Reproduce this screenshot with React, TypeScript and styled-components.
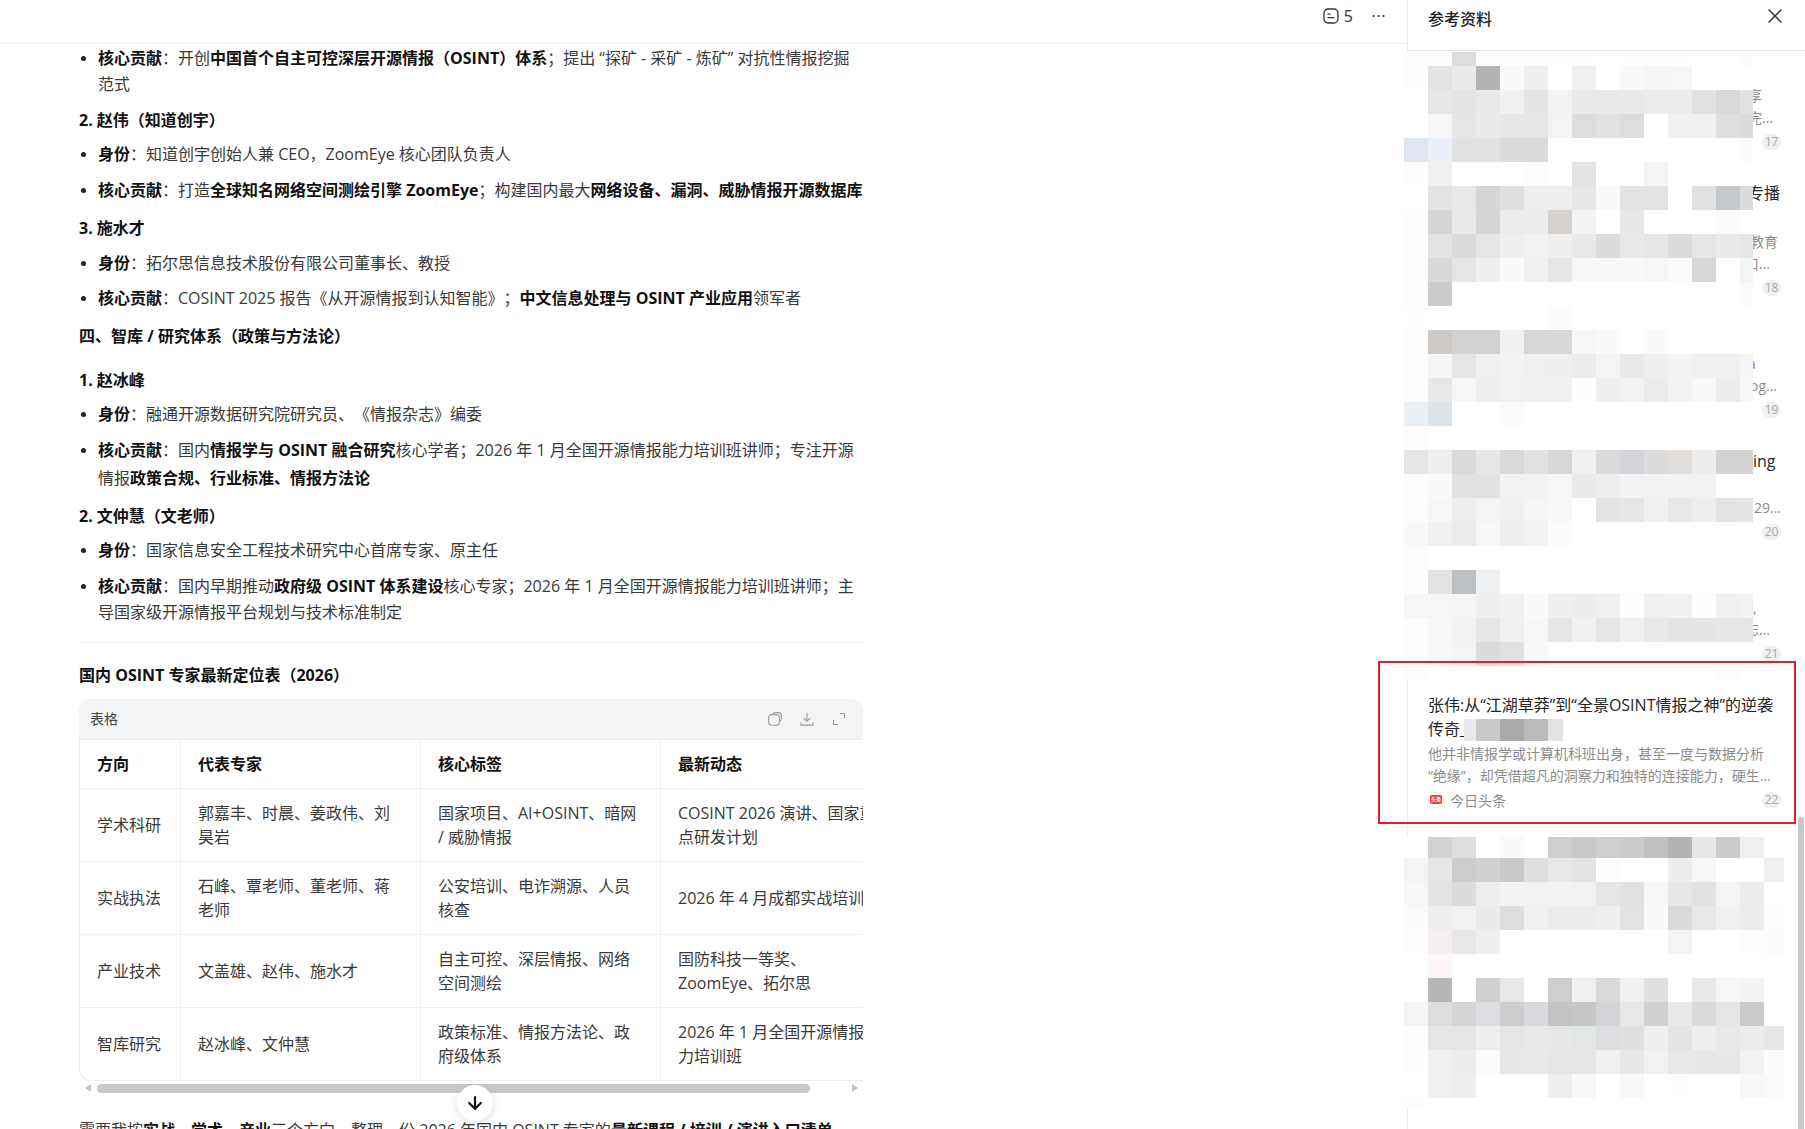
import React from 'react'
import styled, { createGlobalStyle } from 'styled-components'
import { ArrowDown, X } from 'lucide-react'

const GlobalStyle = createGlobalStyle`
  html, body {
    margin: 0;
    height: 100%;
    background: #fff;
    overflow: hidden;
  }
  body {
    font-family: "Open Sans", "Noto Sans CJK SC", sans-serif;
    color: #333;
    font-size: 16px;
    text-spacing-trim: space-all;
  }
`

const Page = styled.div`
  position: relative;
  display: flex;
  height: 1129px;
  overflow: hidden;
`

const Main = styled.main`
  flex: 1;
  min-width: 0;
`

const TopBar = styled.header`
  display: flex;
  justify-content: flex-end;
  align-items: center;
  height: 32px;
  padding: 0 22px 11px 0;
  border-bottom: 1px solid #eeeeee;
  color: #333;
`

const CommentCount = styled.span`
  display: inline-flex;
  align-items: center;
  gap: 5px;
  margin-right: 19px;
  font-size: 16px;
  line-height: 20px;
`

const Article = styled.article`
  width: 784px;
  margin-left: 79px;
  padding-top: 1px;
  line-height: 26px;
`

const BulletList = styled.ul`
  margin: 0;
  padding: 0 0 0 19px;
  list-style: disc;
`

const Item = styled.li<{ $gap?: number; $loose?: boolean }>`
  margin-top: ${p => p.$gap ?? 10}px;
  line-height: ${p => (p.$loose ? 28 : 26)}px;
  color: #3a3a3a;
  &::marker {
    color: #222;
    font-size: 14px;
  }
  strong {
    color: #111;
    font-weight: 700;
  }
`

const Heading = styled.div<{ $gap: number }>`
  margin-top: ${p => p.$gap}px;
  font-weight: 700;
  color: #111;
`

const Rule = styled.hr`
  margin: 17px 0 19px;
  border: 0;
  height: 1px;
  background: #ececec;
`

const TableSection = styled.section`
  position: relative;
  margin-top: 11px;
`

const TableBar = styled.div`
  display: flex;
  justify-content: space-between;
  align-items: center;
  height: 41px;
  padding: 0 16px 0 11px;
  border-radius: 12px 12px 0 0;
  border-bottom: 1px solid #eceef0;
  background: #f3f4f6;
  font-size: 14px;
  color: #444;
  box-sizing: border-box;
`

const TableTools = styled.div`
  display: flex;
  gap: 16px;
  color: #9a9a9a;
`

const TableClip = styled.div`
  overflow: hidden;
  border-left: 1px solid #eceef0;
  border-bottom: 1px solid #eceef0;
  border-bottom-left-radius: 12px;
`

const Grid = styled.table`
  width: 821px;
  table-layout: fixed;
  border-collapse: separate;
  border-spacing: 0;
`

const HeadCell = styled.th<{ $width: number }>`
  width: ${p => p.$width}px;
  box-sizing: border-box;
  padding: 12px 16px 12px 17px;
  border-right: 1px solid #eceef0;
  border-bottom: 1px solid #eceef0;
  text-align: left;
  font-weight: 700;
  line-height: 24px;
  color: #111;
`

const Cell = styled.td<{ $last?: boolean }>`
  padding: 12px 15px 12px 17px;
  border-right: 1px solid #eceef0;
  border-bottom: ${p => (p.$last ? '0' : '1px solid #eceef0')};
  vertical-align: middle;
  line-height: 24px;
  color: #3a3a3a;
`

const ScrollRow = styled.div`
  display: flex;
  align-items: center;
  height: 14px;
  padding: 0 5px 0 6px;
`

const ScrollArrow = styled.i<{ $right?: boolean }>`
  width: 0;
  height: 0;
  border-style: solid;
  border-width: 4px 0 4px 6px;
  border-color: transparent transparent transparent #c4c4c4;
  transform: ${p => (p.$right ? 'none' : 'rotate(180deg)')};
`

const ScrollThumb = styled.div`
  width: 713px;
  height: 9px;
  margin: 0 auto 0 6px;
  border-radius: 5px;
  background: #c8c8c8;
`

const JumpButton = styled.button`
  position: absolute;
  left: 378px;
  bottom: -26px;
  display: flex;
  align-items: center;
  justify-content: center;
  width: 36px;
  height: 36px;
  padding: 0;
  border: 0;
  border-radius: 50%;
  background: #fff;
  color: #111;
  box-shadow: 0 2px 8px rgba(0, 0, 0, 0.12);
`

const NextPrompt = styled.p`
  margin: 22px 0 0;
  color: #3a3a3a;
  white-space: nowrap;
  strong {
    color: #111;
    font-weight: 700;
  }
`

const Sidebar = styled.aside`
  position: relative;
  flex: 0 0 397px;
  border-left: 1px solid #eeeeee;
`

const SidebarHead = styled.div`
  position: relative;
  z-index: 1;
  display: flex;
  justify-content: space-between;
  align-items: flex-start;
  height: 46px;
  padding: 4px 18px 0 20px;
  border-bottom: 1px solid #e8e8e8;
  background: #fff;
`

const SidebarTitle = styled.h2`
  margin: 3px 0 0;
  font-size: 16px;
  line-height: 24px;
  font-weight: 500;
  color: #222;
`

const CardList = styled.div`
  margin-top: -3px;
`

const Card = styled.div`
  padding: 11px 24px 16px 20px;
`

const CardTitle = styled.div<{ $inset?: number }>`
  min-height: 24px;
  padding-left: ${p => p.$inset ?? 0}px;
  font-size: 16px;
  line-height: 24px;
  color: #262626;
  white-space: nowrap;
`

const TitleBlur = styled.svg`
  display: inline-block;
  vertical-align: top;
  margin: 2px 0 0 -3px;
`

const CardDesc = styled.div<{ $inset?: number }>`
  height: 22px;
  padding-left: ${p => p.$inset ?? 0}px;
  font-size: 14px;
  line-height: 22px;
  color: #8c8c8c;
  white-space: nowrap;
`

const CardBody = styled.div`
  margin-top: 2px;
`

const CardFoot = styled.div`
  display: flex;
  align-items: center;
  justify-content: space-between;
  height: 25px;
`

const Source = styled.span`
  display: inline-flex;
  align-items: center;
  gap: 6px;
  font-size: 14px;
  color: #8c8c8c;
`

const SourceLogo = styled.span`
  display: inline-flex;
  align-items: center;
  justify-content: center;
  box-sizing: border-box;
  width: 16px;
  height: 16px;
  border: 1px solid #e4e4e4;
  border-radius: 50%;
`

const SourceMark = styled.b`
  display: block;
  width: 12px;
  height: 9px;
  border-radius: 2px;
  background: #f04142;
  color: #fff;
  font-size: 5px;
  line-height: 9px;
  text-align: center;
  font-weight: 700;
`

const Badge = styled.span`
  margin-left: auto;
  min-width: 19px;
  height: 16px;
  border-radius: 8px;
  background: #f0f0f0;
  color: #aaaaaa;
  font-size: 12px;
  line-height: 16px;
  text-align: center;
`

const MosaicLayer = styled.svg<{ $top: number }>`
  position: absolute;
  left: -4px;
  top: ${p => p.$top}px;
  display: block;
`

const SideThumb = styled.div`
  position: absolute;
  right: 1px;
  top: 817px;
  bottom: 0;
  width: 6px;
  border-radius: 3px 3px 0 0;
  background: #c8c8c8;
`

const RedFrame = styled.div`
  position: absolute;
  left: 1378px;
  top: 661px;
  width: 414px;
  height: 159px;
  border: 2px solid #ed1c24;
  pointer-events: none;
`

// sampled from the blurred parts of the panel, one string per row of 24px cells
const upperMosaic = [
  'fd fd dd fd fe fe fe fe ff fe fe fe ff ff fc',
  'fd e3 ea b4 f9 ef ff f0 ff f9 f5 f6 ff ff ff',
  'ff e6 e4 e9 f1 e4 f3 ea ea ea ec ec e2 d9 e2',
  'ff f7 e5 ea e6 e6 f4 dd e2 dd ff f1 f1 de dc',
  'dfe6f0 ebeff7 e2 e2 dc dc ff ff ff ff ff ff ff ff fb',
  'fd f0 ff ff ff fd ff e4 ff ff f5 ff ff ff ff',
  'ff e3 e8 d5 e0 ee ee e7 fa e3 e3 ff e1 c6c9cc dc',
  'fd d6 ea d6 ec ec d5d2cf f3 ff e7 ff ff ff fb ff',
  'fd e3 dc e5 ef f2 ef e9 dc e9 e6 dc e5 ea e6',
  'fd d8 e5 ef fa f0 e5 f7 f8 f8 f6 fb d7 ff f5',
  'fd cb ff ff ff ff ff ff ff ff ff ff ff ff fb',
  'fe ff ff ff ff ff fc ff ff ff ff ff ff ff ff',
  'fd cdc9c6 d2 d2 f1 d8 d8 f7 fa ff fa ff ff ff ff',
  'fd f5 e6 f0 f3 f0 ef ec f4 e9 ef f3 f0 f0 f5',
  'fd e8 f6 ef f2 f1 f1 fd ef f3 ec f3 f8 ebedef f7',
  'e9eff3 dce4ea ff ff fb ff ff ff ff ff ff ff ff ff ff',
  'fd ff ff ff ff ff ff ff ff ff ff ff ff ff ff',
  'e6 ef dbd9da e6 d9 e2 d7 f0 da d4d5da dc e3dfdd eeedeb d3 d3',
  'fd fa e2 e2 f2 f2 f6 ea ee f3 f3 f3 f2 ff ff',
  'fd f7 ee f4 f0 f5 f8 ff e4 e6 f1 e8 ee e3 e4',
  'f9 f1 ec f7 ef f3 fb ff ff ff ff ff ff ff ff',
  'fd ff ff ff ff ff ff ff ff ff ff ff ff ff ff',
  'fd e3 bcc0c3 eef0f2 ff ff ff ff ff ff ff ff ff ff ff',
  'f6 f6 f5 ef f1 fa ef ecedef f0 fd f0 f1 fd f0 f2',
  'fd f8 f3 e6 f0 f7 e5 f1 e5 f0 e9 e4 e4 e6 e5',
  'fd f8 f4 dc e1 f9 ff ff ff ff ff ff ff ff ff',
  'fd ff ff ff ff ff ff ff ff ff ff ff ff fd ff'
]

const lowerMosaic = [
  'ff d2 dd ff fa ff cfcdce c8 ce ca c1 b3 e6 cb f0 ff',
  'f4 e6 cc d1 c9 df e8 e4 fd ff ff ecedef f6 ff ff eef0f2',
  'f7 e4 dc edeef0 f3 f2 f3 f2 e5 e1 f8 e7 e2 f4 ec ff',
  'fb ee f2 eb dd f1 ec ec ef e3 fa da e8 f1 ed fd',
  'fd f5eff0 e8 ef ff ff ff ff ff ff ff f4 ff ff fd fc',
  'ff fef6f7 ff ff ff ff ff ff ff ff ff ff ff ff ff ff',
  'ff b6 ff cfd1d0 e8 ff ce f0 d9 f1 e0 ff e8 f6 f3 ff',
  'f4 dfdcde d5 dcdde0 cfcdcb d8d9dc c3 c7 d3d5d9 e8 d1 e9 da e5 c9cbca ff',
  'fd e6 e5 ee e5 e8 e7 e2e6e5 e0dde0 e0 ef e4 ee e8 ec e6',
  'fd f0 ec fb e7 e8 e6 e6 f0 e7 f2 e8 e7 e7 f3 fc',
  'ff f0 ee ff ff ff ee f8 ff f9 ff fe ff ff f8 fb',
  'fd ff ff ff ff ff ff ff ff ff ff ff ff ff ff ff'
]

const toColor = (c: string) => (c.length === 2 ? `#${c}${c}${c}` : `#${c}`)

interface MosaicProps {
  rows: string[]
  top: number
  width: number
  height: number
  firstRow: number
}

const Mosaic: React.FC<MosaicProps> = ({ rows, top, width, height, firstRow }) => (
  <MosaicLayer $top={top} width={width} height={height} shapeRendering="crispEdges" aria-hidden="true">
    {rows.map((row, r) =>
      row.split(' ').map((c, i) => (
        <rect
          key={`${r}-${i}`}
          x={i * 24}
          y={r === 0 ? 0 : firstRow + (r - 1) * 24}
          width={24}
          height={r === 0 ? firstRow : 24}
          fill={toColor(c)}
        />
      ))
    )}
  </MosaicLayer>
)

const NoteIcon = () => (
  <svg width="16" height="16" viewBox="0 0 16 16" fill="none" stroke="currentColor">
    <rect x="1" y="1" width="14" height="14" rx="4" strokeWidth="1.3" />
    <path d="M4.5 6.2h3M4.5 9.6h7" strokeWidth="1.3" />
  </svg>
)

const DotsIcon = () => (
  <svg width="13" height="4" viewBox="0 0 13 4" fill="currentColor">
    <circle cx="1.5" cy="2" r="1.1" />
    <circle cx="6.5" cy="2" r="1.1" />
    <circle cx="11.5" cy="2" r="1.1" />
  </svg>
)

const CopyIcon = () => (
  <svg width="16" height="16" viewBox="0 0 16 16" fill="none" stroke="currentColor" strokeWidth="1.1">
    <path d="M5.5 3.6C6 2.4 7 1.6 8.4 1.6h3c1.700 0 2.900 1.200 2.900 2.900v3c0 1.300-.7 2.300-1.900 2.800" />
    <rect x="1.700" y="3.600" width="10.700" height="10.700" rx="3" />
  </svg>
)

const SaveIcon = () => (
  <svg width="16" height="16" viewBox="0 0 16 16" fill="none" stroke="currentColor" strokeWidth="1.1">
    <path d="M8 1.800v8.200M4.600 6.800 8 10.200l3.400-3.400M2 11.200v2.900h12v-2.900" />
  </svg>
)

const ExpandIcon = () => (
  <svg width="16" height="16" viewBox="0 0 16 16" fill="none" stroke="currentColor" strokeWidth="1.1">
    <path d="M9 2.500h4.500V7M7 13.500H2.500V9" />
  </svg>
)

const columns = [
  { label: '方向', width: 101 },
  { label: '代表专家', width: 240 },
  { label: '核心标签', width: 240 },
  { label: '最新动态', width: 240 }
]

const tableRows = [
  ['学术科研', '郭嘉丰、时晨、姜政伟、刘昊岩', '国家项目、AI+OSINT、暗网 / 威胁情报', 'COSINT 2026 演讲、国家重点研发计划'],
  ['实战执法', '石峰、覃老师、董老师、蒋老师', '公安培训、电诈溯源、人员核查', '2026 年 4 月成都实战培训班'],
  ['产业技术', '文盖雄、赵伟、施水才', '自主可控、深层情报、网络空间测绘', '国防科技一等奖、ZoomEye、拓尔思'],
  ['智库研究', '赵冰峰、文仲慧', '政策标准、情报方法论、政府级体系', '2026 年 1 月全国开源情报能力培训班']
]

interface Fragment {
  text: string
  inset: number
}

interface SourceCard {
  index: number
  title: (Fragment | null)[]
  desc: (Fragment | null)[]
}

const hiddenCards: SourceCard[] = [
  { index: 17, title: [null], desc: [{ text: '享', inset: 320 }, { text: '完...', inset: 320 }] },
  { index: 18, title: [{ text: '专播', inset: 320 }, null], desc: [{ text: '教育', inset: 322 }, { text: '口...', inset: 317 }] },
  { index: 19, title: [null], desc: [{ text: 'a', inset: 320 }, { text: 'og...', inset: 322 }] },
  { index: 20, title: [{ text: 'ing', inset: 325 }], desc: [null, { text: '29...', inset: 326 }] },
  { index: 21, title: [null], desc: [{ text: ',', inset: 325 }, { text: '忘...', inset: 317 }] }
]

const FragmentCard: React.FC<{ card: SourceCard }> = ({ card }) => (
  <Card>
    {card.title.map((t, i) => (
      <CardTitle key={i} $inset={t?.inset}>{t?.text}</CardTitle>
    ))}
    <CardBody>
      {card.desc.map((d, i) => (
        <CardDesc key={i} $inset={d?.inset}>{d?.text}</CardDesc>
      ))}
    </CardBody>
    <CardFoot>
      <Badge>{card.index}</Badge>
    </CardFoot>
  </Card>
)

const App: React.FC = () => (
  <Page>
    <GlobalStyle />
    <Main>
      <TopBar>
        <CommentCount><NoteIcon />5</CommentCount>
        <DotsIcon />
      </TopBar>
      <Article>
        <BulletList>
          <Item $gap={0}>
            <strong>核心贡献</strong>：开创<strong>中国首个自主可控深层开源情报（OSINT）体系</strong>；提出 “探矿 - 采矿 - 炼矿” 对抗性情报挖掘范式
          </Item>
        </BulletList>
        <Heading $gap={10}>2. 赵伟（知道创宇）</Heading>
        <BulletList>
          <Item $gap={8}><strong>身份</strong>：知道创宇创始人兼 CEO，ZoomEye 核心团队负责人</Item>
          <Item><strong>核心贡献</strong>：打造<strong>全球知名网络空间测绘引擎 ZoomEye</strong>；构建国内最大<strong>网络设备、漏洞、威胁情报开源数据库</strong></Item>
        </BulletList>
        <Heading $gap={12}>3. 施水才</Heading>
        <BulletList>
          <Item $gap={9}><strong>身份</strong>：拓尔思信息技术股份有限公司董事长、教授</Item>
          <Item $gap={9}><strong>核心贡献</strong>：COSINT 2025 报告《从开源情报到认知智能》；<strong>中文信息处理与 OSINT 产业应用</strong>领军者</Item>
        </BulletList>
        <Heading $gap={12}>四、智库 / 研究体系（政策与方法论）</Heading>
        <Heading $gap={18}>1. 赵冰峰</Heading>
        <BulletList>
          <Item $gap={8}><strong>身份</strong>：融通开源数据研究院研究员、《情报杂志》编委</Item>
          <Item $gap={9} $loose>
            <strong>核心贡献</strong>：国内<strong>情报学与 OSINT 融合研究</strong>核心学者；2026 年 1 月全国开源情报能力培训班讲师；专注开源情报<strong>政策合规、行业标准、情报方法论</strong>
          </Item>
        </BulletList>
        <Heading $gap={11}>2. 文仲慧（文老师）</Heading>
        <BulletList>
          <Item $gap={8}><strong>身份</strong>：国家信息安全工程技术研究中心首席专家、原主任</Item>
          <Item>
            <strong>核心贡献</strong>：国内早期推动<strong>政府级 OSINT 体系建设</strong>核心专家；2026 年 1 月全国开源情报能力培训班讲师；主导国家级开源情报平台规划与技术标准制定
          </Item>
        </BulletList>
        <Rule />
        <Heading $gap={0}>国内 OSINT 专家最新定位表（2026）</Heading>
        <TableSection>
          <TableBar>
            表格
            <TableTools>
              <CopyIcon />
              <SaveIcon />
              <ExpandIcon />
            </TableTools>
          </TableBar>
          <TableClip>
            <Grid>
              <thead>
                <tr>
                  {columns.map(col => (
                    <HeadCell key={col.label} $width={col.width}>{col.label}</HeadCell>
                  ))}
                </tr>
              </thead>
              <tbody>
                {tableRows.map((row, r) => (
                  <tr key={row[0]}>
                    {row.map(text => (
                      <Cell key={text} $last={r === tableRows.length - 1}>{text}</Cell>
                    ))}
                  </tr>
                ))}
              </tbody>
            </Grid>
          </TableClip>
          <ScrollRow>
            <ScrollArrow />
            <ScrollThumb />
            <ScrollArrow $right />
          </ScrollRow>
          <JumpButton aria-label="回到底部"><ArrowDown size={20} strokeWidth={2.6} /></JumpButton>
        </TableSection>
        <NextPrompt>
          需要我按<strong>实战</strong>、<strong>学术</strong>、<strong>产业</strong>三个方向，整理一份 2026 年国内 OSINT 专家的<strong>最新课程 / 培训 / 演讲入口清单</strong>
        </NextPrompt>
      </Article>
    </Main>
    <Sidebar>
      <SidebarHead>
        <SidebarTitle>参考资料</SidebarTitle>
        <X size={24} strokeWidth={1.5} color="#333" />
      </SidebarHead>
      <CardList>
        {hiddenCards.map(card => (
          <FragmentCard key={card.index} card={card} />
        ))}
        <Card>
          <CardTitle>张伟:从“江湖草莽”到“全景OSINT情报之神”的逆袭</CardTitle>
          <CardTitle>
            传奇_
            <TitleBlur width="99" height="22" shapeRendering="crispEdges" aria-hidden="true">
              <rect x="0" width="12" height="22" fill="#e9e9e9" />
              <rect x="12" width="24" height="22" fill="#c9c9c9" />
              <rect x="36" width="24" height="22" fill="#ababab" />
              <rect x="60" width="24" height="22" fill="#bbbbbb" />
              <rect x="84" width="15" height="22" fill="#e4e4e4" />
            </TitleBlur>
          </CardTitle>
          <CardBody>
            <CardDesc>他并非情报学或计算机科班出身，甚至一度与数据分析</CardDesc>
            <CardDesc>“绝缘”，却凭借超凡的洞察力和独特的连接能力，硬生...</CardDesc>
          </CardBody>
          <CardFoot>
            <Source>
              <SourceLogo><SourceMark>头条</SourceMark></SourceLogo>
              今日头条
            </Source>
            <Badge>22</Badge>
          </CardFoot>
        </Card>
      </CardList>
      <Mosaic rows={upperMosaic} top={52} width={349} height={630} firstRow={14} />
      <Mosaic rows={lowerMosaic} top={837} width={380} height={271} firstRow={21} />
      <SideThumb />
    </Sidebar>
    <RedFrame />
  </Page>
)

export default App
